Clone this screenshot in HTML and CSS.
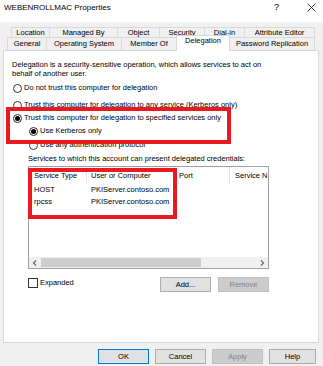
FILE: index.html
```html
<!DOCTYPE html>
<html lang="en">
<head>
    <meta charset="UTF-8">
    <title>WEBENROLLMAC Properties</title>
    <link rel="stylesheet" href="styles.css">
</head>
<body>
    <div class="dialog">
        <div class="titlebar">
            <span class="title">WEBENROLLMAC Properties</span>
            <span class="help-q">?</span>
            <svg class="close" width="9" height="9" viewBox="0 0 9 9">
                <line x1="0.5" y1="0.5" x2="8.5" y2="8.5" stroke="#222" stroke-width="0.9"></line>
                <line x1="8.5" y1="0.5" x2="0.5" y2="8.5" stroke="#222" stroke-width="0.9"></line>
            </svg>
        </div>

        <div class="tabs">
            <div class="tab-row row-back">
                <div class="tab w38">Location</div>
                <div class="tab w68">Managed By</div>
                <div class="tab w42">Object</div>
                <div class="tab w45">Security</div>
                <div class="tab w40">Dial-in</div>
                <div class="tab w70">Attribute Editor</div>
            </div>
            <div class="tab-row row-front">
                <div class="tab w39">General</div>
                <div class="tab w75">Operating System</div>
                <div class="tab w55">Member Of</div>
                <div class="tab w53 active">Delegation</div>
                <div class="tab w85">Password Replication</div>
            </div>
        </div>

        <div class="panel">
            <p class="intro">Delegation is a security-sensitive operation, which allows services to act on behalf of another user.</p>

            <div class="options">
                <label class="radio r1"><span class="dot"></span>Do not trust this computer for delegation</label>
                <label class="radio r2"><span class="dot"></span>Trust this computer for delegation to any service (Kerberos only)</label>
                <label class="radio r3"><span class="dot on"></span>Trust this computer for delegation to specified services only</label>
                <label class="radio r4 sub"><span class="dot on"></span>Use Kerberos only</label>
                <label class="radio r5 sub"><span class="dot"></span>Use any authentication protocol</label>
            </div>

            <div class="services">
                <div class="services-label">Services to which this account can present delegated credentials:</div>
                <div class="listbox">
                    <div class="list-head">
                        <div class="col c1">Service Type</div>
                        <div class="col c2">User or Computer</div>
                        <div class="col c3">Port</div>
                        <div class="col c4">Service N</div>
                    </div>
                    <div class="list-row">
                        <div class="col c1">HOST</div>
                        <div class="col c2">PKIServer.contoso.com</div>
                    </div>
                    <div class="list-row">
                        <div class="col c1">rpcss</div>
                        <div class="col c2">PKIServer.contoso.com</div>
                    </div>
                    <div class="list-fill"></div>
                    <div class="hscroll">
                        <svg class="arrow" width="12" height="10" viewBox="0 0 12 10">
                            <polyline points="7,2.5 4.5,5 7,7.5" fill="none" stroke="#606060" stroke-width="1.1"></polyline>
                        </svg>
                        <div class="track"><div class="thumb"></div></div>
                        <svg class="arrow" width="12" height="10" viewBox="0 0 12 10">
                            <polyline points="5,2.5 7.5,5 5,7.5" fill="none" stroke="#606060" stroke-width="1.1"></polyline>
                        </svg>
                    </div>
                </div>

                <div class="list-actions">
                    <label class="check"><span class="box"></span>Expanded</label>
                    <div class="btns">
                        <button class="btn">Add...</button>
                        <button class="btn disabled">Remove</button>
                    </div>
                </div>
            </div>
        </div>

        <div class="footer">
            <button class="btn default">OK</button>
            <button class="btn">Cancel</button>
            <button class="btn disabled">Apply</button>
            <button class="btn narrow">Help</button>
        </div>
    </div>

    <!-- annotation boxes drawn over the dialog -->
    <div class="mark mark-radio"></div>
    <div class="mark mark-list"></div>
</body>
</html>
```

FILE: styles.css
```css
* {
    margin: 0;
    padding: 0;
    box-sizing: border-box;
}

body {
    width: 323px;
    height: 366px;
    overflow: hidden;
    background: #f0f0f0;
    font-family: 'Liberation Sans', Arial, sans-serif;
    font-size: 7.5px;
    color: #000;
    position: relative;
}

.dialog {
    display: flex;
    flex-direction: column;
}

/* title bar */

.titlebar {
    height: 22px;
    background: #fff;
    display: flex;
    align-items: flex-start;
    padding: 3px 0 0 4px;
}

.title {
    font-size: 8px;
    line-height: 9px;
    flex: 1;
}

.help-q {
    font-size: 9px;
    line-height: 9px;
    width: 33px;
}

.close {
    margin: 0 7px 0 0;
}

/* tabs */

.tabs {
    padding-top: 5px;
    height: 28px;
}

.tab-row {
    display: flex;
}

.row-back {
    padding-left: 12px;
    height: 10px;
}

.row-front {
    padding-left: 8px;
    height: 15px;
    margin-top: -2px;
    align-items: flex-end;
}

.tab {
    border: 1px solid #d9d9d9;
    border-bottom: none;
    margin-left: -1px;
    background: #f0f0f0;
    text-align: center;
    line-height: 9px;
    white-space: nowrap;
    overflow: hidden;
}

.row-back .tab {
    height: 10px;
}

.row-front .tab {
    height: 13px;
    line-height: 11px;
}

.row-front .tab.active {
    height: 16px;
    margin-bottom: -1px;
    background: #fff;
    line-height: 10px;
    position: relative;
    z-index: 1;
}

.w38 { width: 39px; }
.w39 { width: 40px; }
.w40 { width: 41px; }
.w42 { width: 43px; }
.w45 { width: 46px; }
.w53 { width: 54px; }
.w55 { width: 56px; }
.w68 { width: 69px; }
.w70 { width: 71px; }
.w75 { width: 76px; }
.w85 { width: 86px; }

/* property page */

.panel {
    margin: 0 4px 0 3px;
    height: 293px;
    background: #fff;
    border: 1px solid #d9d9d9;
    padding: 9px 0 0 8px;
}

.intro {
    width: 260px;
    line-height: 9px;
}

.options {
    display: flex;
    flex-direction: column;
    margin-top: 5px;
}

.radio {
    display: flex;
    align-items: center;
    height: 10px;
    line-height: 10px;
    white-space: nowrap;
}

.r2 { margin-top: 7px; }
.r3 { margin-top: 3px; }
.r4 { margin-top: 3px; }
.r5 { margin-top: 4px; }

.radio.sub {
    padding-left: 16px;
}

.dot {
    width: 9px;
    height: 9px;
    border: 1px solid #333;
    border-radius: 50%;
    margin: 0 2px 0 1px;
    display: flex;
    align-items: center;
    justify-content: center;
}

.dot.on::after {
    content: '';
    width: 5px;
    height: 5px;
    border-radius: 50%;
    background: #000;
}

.services {
    padding-left: 16px;
    width: 256px;
}

.services-label {
    margin-top: 4px;
    line-height: 10px;
    white-space: nowrap;
}

.listbox {
    margin-top: 2px;
    height: 103px;
    width: 241px;
    border: 1px solid #a0a0a0;
    display: flex;
    flex-direction: column;
    overflow: hidden;
}

.list-head,
.list-row {
    display: flex;
    white-space: nowrap;
}

.list-head {
    height: 17px;
    align-items: stretch;
}

.list-head .col {
    border-right: 1px solid #e5e5e5;
    line-height: 17px;
}

.list-row {
    height: 12px;
    line-height: 12px;
}

.col {
    flex: none;
    overflow: hidden;
}

.c1 { width: 58px; padding-left: 5px; }
.c2 { width: 87px; padding-left: 4px; }
.c3 { width: 56px; padding-left: 5px; }
.c4 { width: 60px; padding-left: 5px; }

.list-fill {
    flex: 1;
}

.hscroll {
    height: 11px;
    background: #f0f0f0;
    display: flex;
    align-items: center;
}

.track {
    flex: 1;
    height: 11px;
    padding: 1px 0;
}

.thumb {
    width: 160px;
    height: 9px;
    background: #cdcdcd;
}

.list-actions {
    width: 241px;
    margin-top: 8px;
    display: flex;
    justify-content: space-between;
    align-items: flex-start;
}

.check {
    display: flex;
    align-items: center;
    height: 10px;
    margin-top: 1px;
    line-height: 10px;
}

.box {
    width: 10px;
    height: 10px;
    border: 1px solid #333;
    background: #fff;
    margin-right: 2px;
}

.btns {
    display: flex;
    gap: 7px;
}

/* buttons */

.btn {
    font-family: 'Liberation Sans', Arial, sans-serif;
    font-size: 7.5px;
    width: 51px;
    height: 15px;
    background: #e1e1e1;
    border: 1px solid #adadad;
    color: #000;
}

.btn.default {
    border: 1px solid #0078d7;
}

.btn.disabled {
    background: #cccccc;
    border-color: #bfbfbf;
    color: #838383;
}

.btn.narrow {
    width: 47px;
}

.footer {
    display: flex;
    justify-content: flex-end;
    gap: 6px;
    padding: 6px 7px 0 0;
}

/* red annotation boxes */

.mark {
    position: absolute;
    border: 4px solid #e8191f;
}

.mark-radio {
    left: 6px;
    top: 107px;
    width: 225px;
    height: 37px;
}

.mark-list {
    left: 28px;
    top: 168px;
    width: 149px;
    height: 51px;
}
```
